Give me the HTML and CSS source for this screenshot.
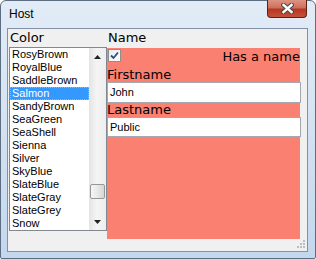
FILE: index.html
```html
<!DOCTYPE html>
<html lang="en">
<head>
    <meta charset="UTF-8">
    <title>Host</title>
    <link rel="stylesheet" href="styles.css">
</head>
<body>
    <div class="window">
        <!-- Title bar -->
        <div class="titlebar">
            <span class="title">Host</span>
            <div class="close">
                <svg width="13" height="11" viewBox="0 0 13 11">
                    <path d="M2.5 2 L10.5 9 M10.5 2 L2.5 9" stroke="#4a4a4a" stroke-width="4.6" stroke-linecap="square"/>
                    <path d="M2.5 2 L10.5 9 M10.5 2 L2.5 9" stroke="#ffffff" stroke-width="2.4" stroke-linecap="square"/>
                </svg>
            </div>
        </div>

        <div class="client">
            <div class="col">
                <div class="head head-left">Color</div>
                <div class="listbox">
                    <ul class="items">
                        <li>RosyBrown</li>
                        <li>RoyalBlue</li>
                        <li>SaddleBrown</li>
                        <li class="selected">Salmon</li>
                        <li>SandyBrown</li>
                        <li>SeaGreen</li>
                        <li>SeaShell</li>
                        <li>Sienna</li>
                        <li>Silver</li>
                        <li>SkyBlue</li>
                        <li>SlateBlue</li>
                        <li>SlateGray</li>
                        <li>SlateGrey</li>
                        <li>Snow</li>
                    </ul>
                    <div class="scrollbar">
                        <div class="arrow">
                            <svg width="7" height="4" viewBox="0 0 7 4"><polygon points="0,4 3.5,0 7,4" fill="#222"/></svg>
                        </div>
                        <div class="track">
                            <div class="thumb"></div>
                        </div>
                        <div class="arrow">
                            <svg width="7" height="4" viewBox="0 0 7 4"><polygon points="0,0 7,0 3.5,4" fill="#222"/></svg>
                        </div>
                    </div>
                </div>
            </div>

            <div class="col">
                <div class="head head-right">Name</div>
                <div class="panel">
                    <div class="check-row">
                        <span class="checkbox">
                            <svg width="9" height="9" viewBox="0 0 9 9">
                                <path d="M1 4.5 L3.5 7 L8 1.5" fill="none" stroke="#2c4c8c" stroke-width="1.8"/>
                            </svg>
                        </span>
                        <span class="check-label">Has a name</span>
                    </div>
                    <div class="field-label">Firstname</div>
                    <div class="textbox tall">John</div>
                    <div class="field-label">Lastname</div>
                    <div class="textbox">Public</div>
                </div>
            </div>

            <svg class="grip" width="9" height="9" viewBox="0 0 9 9">
                <rect x="6" y="0" width="2" height="2" fill="#b8bfc8"/>
                <rect x="3" y="3" width="2" height="2" fill="#b8bfc8"/>
                <rect x="6" y="3" width="2" height="2" fill="#b8bfc8"/>
                <rect x="0" y="6" width="2" height="2" fill="#b8bfc8"/>
                <rect x="3" y="6" width="2" height="2" fill="#b8bfc8"/>
                <rect x="6" y="6" width="2" height="2" fill="#b8bfc8"/>
            </svg>
        </div>
    </div>
</body>
</html>
```

FILE: styles.css
```css
* {
    box-sizing: border-box;
}

body {
    margin: 0;
    font-family: "Liberation Sans", Arial, sans-serif;
    background: #ffffff;
}

.window {
    width: 316px;
    height: 259px;
    display: flex;
    flex-direction: column;
    padding: 0 7px 6px 6px;
    border: 1px solid #5e6e82;
    border-radius: 6px 6px 2px 2px;
    background: linear-gradient(to bottom, #e2ecf7, #d6e4f3 40%, #c3d7ed);
}

/* title bar */
.titlebar {
    height: 27px;
    display: flex;
    align-items: flex-start;
}

.title {
    margin: 6px 0 0 2px;
    font-size: 12px;
    line-height: 14px;
    color: #000;
}

.close {
    margin-left: auto;
    margin-right: 1px;
    margin-top: -1px;
    width: 40px;
    height: 18px;
    display: flex;
    justify-content: center;
    align-items: center;
    border: 1px solid #5e1f17;
    border-top: none;
    border-radius: 0 0 4px 4px;
    background: linear-gradient(to bottom, #dc9483, #cf6f5c 45%, #b73720 55%, #c5503a);
}

/* client area */
.client {
    position: relative;
    height: 224px;
    border: 1px solid #8191a6;
    background: #f0f0f0;
    padding-left: 1px;
    display: grid;
    grid-template-columns: 98px 194px;
    align-items: start;
}

.col {
    display: flex;
    flex-direction: column;
}

.head {
    font-family: "DejaVu Sans", Verdana, sans-serif;
    font-size: 13px;
    color: #000;
}

.head-left {
    height: 18px;
    line-height: 18px;
    padding-left: 1px;
}

.head-right {
    height: 19px;
    line-height: 18px;
    padding-left: 1px;
}

/* list box */
.listbox {
    height: 184px;
    border: 1px solid #828790;
    background: #fff;
    display: flex;
}

.items {
    list-style: none;
    margin: 0;
    padding: 0;
    width: 79px;
    font-size: 11px;
}

.items li {
    height: 13px;
    line-height: 13px;
    padding-left: 2px;
    color: #000;
    white-space: nowrap;
}

.items li.selected {
    background: #3399ff;
    color: #fff;
    outline: 1px dotted #f6a04c;
    outline-offset: -1px;
}

.scrollbar {
    width: 17px;
    display: flex;
    flex-direction: column;
    background: linear-gradient(to right, #e4e4e4, #f4f4f4 45%, #eeeeee);
}

.arrow {
    height: 17px;
    display: flex;
    justify-content: center;
    align-items: center;
}

.track {
    flex: 1;
}

.thumb {
    margin: 119px 0 0 1px;
    width: 15px;
    height: 15px;
    border: 1px solid #979797;
    border-radius: 2px;
    background: linear-gradient(to right, #f6f6f6, #e8e8e8 50%, #d6d6d6);
}

/* detail panel */
.panel {
    height: 191px;
    width: 193px;
    background: #fa8072;
    font-family: "DejaVu Sans", Verdana, sans-serif;
    font-size: 13px;
    color: #000;
}

.check-row {
    height: 20px;
    display: flex;
    align-items: flex-start;
}

.checkbox {
    margin: 1px 0 0 1px;
    width: 13px;
    height: 13px;
    border: 1px solid #8e8f8f;
    background: linear-gradient(to bottom right, #e9eaeb, #ffffff);
    display: flex;
    justify-content: center;
    align-items: center;
}

.check-label {
    margin-left: auto;
    line-height: 17px;
}

.field-label {
    height: 14px;
    line-height: 14px;
}

.textbox {
    width: 194px;
    height: 20px;
    line-height: 18px;
    padding-left: 2px;
    border: 1px solid #a5a8ae;
    background: #fff;
    font-family: "Liberation Sans", Arial, sans-serif;
    font-size: 11px;
    color: #000;
}

.textbox.tall {
    height: 21px;
    line-height: 19px;
}

.grip {
    position: absolute;
    right: 1px;
    bottom: 2px;
}
```
